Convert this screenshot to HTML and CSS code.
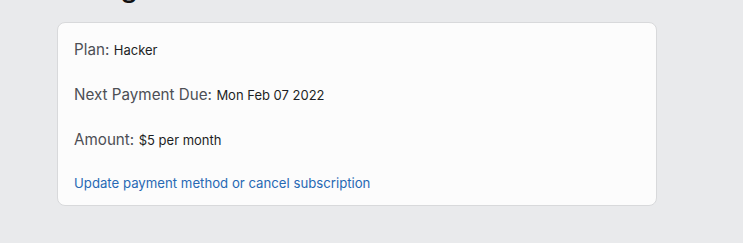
FILE: index.html
```html
<!DOCTYPE html>
<html>
<head>
<meta charset="utf-8">
<link rel="stylesheet" href="styles.css">
</head>
<body>
<main class="page">
  <h1 class="title">Billing</h1>
  <section class="card">
    <p class="row"><span class="label">Plan:</span> <span class="value">Hacker</span></p>
    <p class="row"><span class="label">Next Payment Due:</span> <span class="value">Mon Feb 07 2022</span></p>
    <p class="row"><span class="label">Amount:</span> <span class="value">$5 per month</span></p>
    <p class="row link-row"><a class="link" href="#">Update payment method or cancel subscription</a></p>
  </section>
</main>
</body>
</html>
```
FILE: styles.css
```css
html, body {
  margin: 0;
  padding: 0;
  background: #e9eaec;
  font-family: "Inter", "Noto Sans", sans-serif;
}
.page {
  padding: 0 0 0 57px;
}
.title {
  margin: -30px 0 0 0;
  height: 52px;
  font-size: 28px;
  line-height: 34px;
  font-weight: 500;
  color: #111;
}
.card {
  box-sizing: border-box;
  width: 600px;
  height: 184px;
  background: #fcfcfc;
  border: 1px solid #d8d9db;
  border-radius: 8px;
  padding: 14px 16px 0 16px;
  display: flex;
  flex-direction: column;
  gap: 20px;
}
.row {
  margin: 0;
  line-height: 24px;
}
.label {
  font-size: 15.2px;
  color: #4d4f55;
}
.value {
  font-size: 13px;
  color: #1d1f24;
}
.link-row {
  margin-top: -2px;
}
.link {
  font-size: 13.2px;
  color: #2769b4;
  text-decoration: none;
}
```
